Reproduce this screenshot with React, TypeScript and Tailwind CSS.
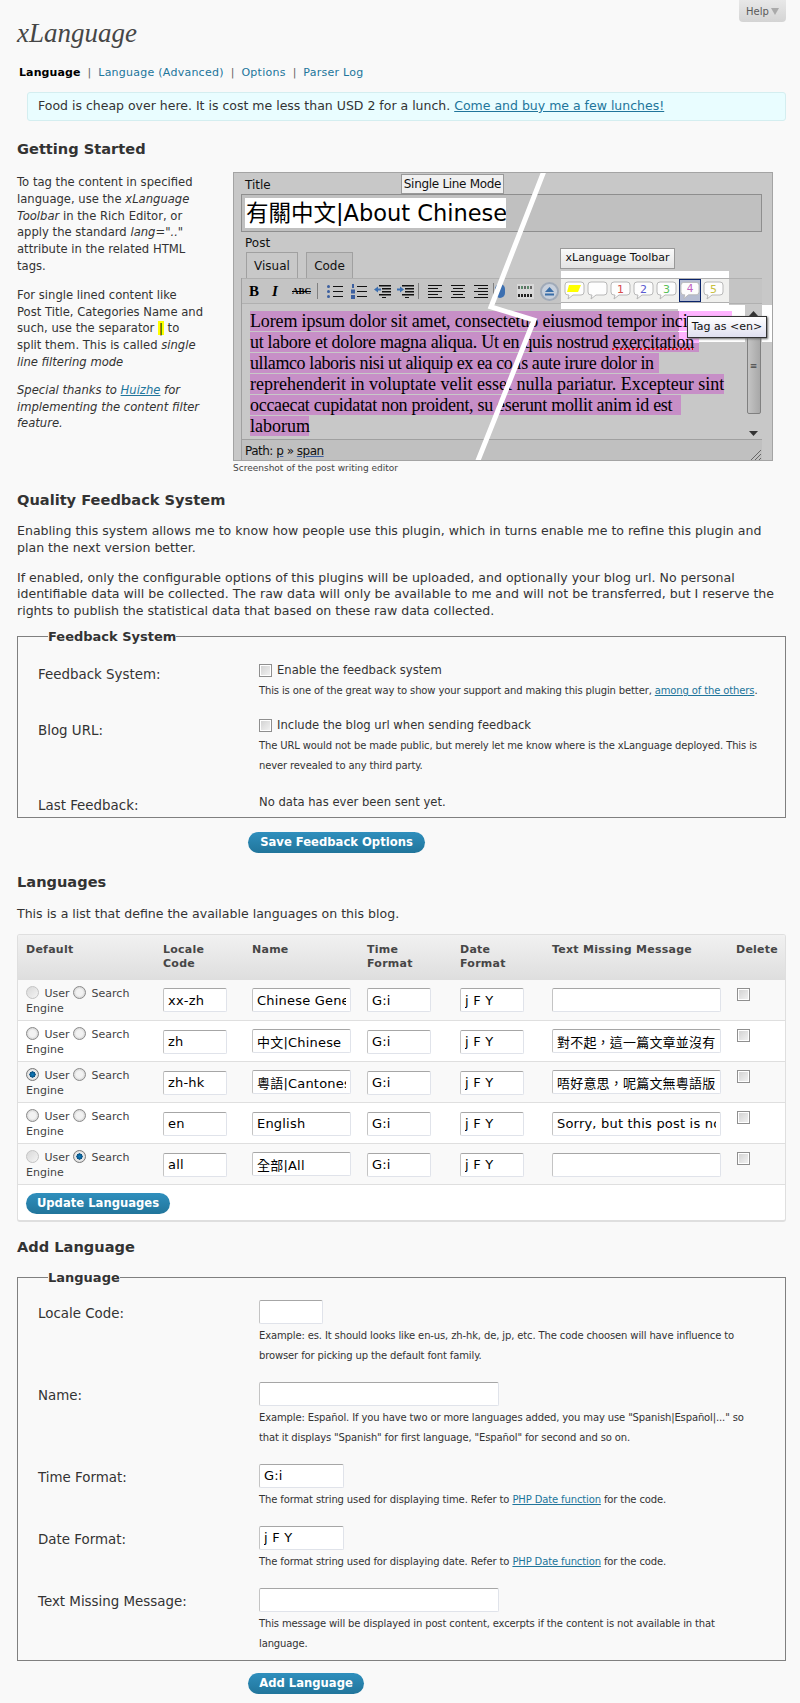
import React from "react";

const sans = "font-['DejaVu_Sans','Noto_Sans_CJK_TC',sans-serif]";

function BlueButton({ children, className = "" }: { children: React.ReactNode; className?: string }) {
  return (
    <button
      className={`flex h-[21px] items-center justify-center rounded-full bg-[linear-gradient(#2f8fbd,#21759b)] text-[11.6px] font-bold text-white ${className}`}
    >
      {children}
    </button>
  );
}

function Check({ className = "" }: { className?: string }) {
  return (
    <input
      type="checkbox"
      className={`m-0 h-[13px] w-[13px] shrink-0 appearance-none border border-[#8f8f8f] bg-[linear-gradient(135deg,#d0d0d0,#f4f4f4)] shadow-[inset_0_0_0_1px_#fff] ${className}`}
    />
  );
}

function Radio({ checked = false, faded = false }: { checked?: boolean; faded?: boolean }) {
  return (
    <input
      type="radio"
      defaultChecked={checked}
      disabled={faded}
      className={`m-0 inline-block h-[13px] w-[13px] appearance-none rounded-full border align-[-2px] ${
        checked
          ? "border-[#7a7a7a] bg-[radial-gradient(circle,#0f7fc0_0,#0a4f80_38%,#f0f0f0_42%,#c8c8c8_100%)]"
          : faded
            ? "border-[#c4c4c4] bg-[linear-gradient(135deg,#d8d8d8,#f4f4f4)]"
            : "border-[#8c8c8c] bg-[radial-gradient(circle,#f2f2f2_0,#f2f2f2_40%,#c0c0c0_100%)]"
      }`}
    />
  );
}

function Field({ value = "", className = "" }: { value?: string; className?: string }) {
  return (
    <input
      readOnly
      value={value}
      className={`h-[24px] rounded-[2px] border border-[#e0e3ea] border-t-[#a6a6a6] border-l-[#c4c4c4] bg-white px-[4px] text-[13px] tracking-[0.2px] text-black outline-none ${className}`}
    />
  );
}

function Lines({ align }: { align: "l" | "c" | "r" }) {
  const rows = [
    [14, 1],
    [10, 4],
    [14, 7],
    [10, 10],
    [14, 13],
  ];
  return (
    <svg width="16" height="15" viewBox="0 0 16 15">
      {rows.map(([w, y]) => (
        <rect key={y} x={align === "l" ? 1 : align === "r" ? 15 - w : 8 - w / 2} y={y} width={w} height="1" fill="#111" />
      ))}
    </svg>
  );
}

function ListIcon({ kind }: { kind: "bullet" | "number" | "outdent" | "indent" }) {
  return (
    <svg width="17" height="15" viewBox="0 0 17 15">
      {kind === "bullet" && (
        <>
          <circle cx="2.5" cy="2.5" r="1.5" fill="#3c5f9f" />
          <circle cx="2.5" cy="7.5" r="1.5" fill="#3c5f9f" />
          <circle cx="2.5" cy="12.5" r="1.5" fill="#3c5f9f" />
          <rect x="7" y="2" width="10" height="1" fill="#111" />
          <rect x="7" y="7" width="10" height="1" fill="#111" />
          <rect x="7" y="12" width="10" height="1" fill="#111" />
        </>
      )}
      {kind === "number" && (
        <>
          <rect x="2" y="0" width="2" height="4" fill="#3c5f9f" />
          <rect x="1" y="5.5" width="4" height="4" fill="#3c5f9f" />
          <rect x="1" y="11" width="4" height="4" fill="#3c5f9f" />
          <rect x="7" y="2" width="10" height="1" fill="#111" />
          <rect x="7" y="7" width="10" height="1" fill="#111" />
          <rect x="7" y="12" width="10" height="1" fill="#111" />
        </>
      )}
      {(kind === "outdent" || kind === "indent") && (
        <>
          <path
            d={kind === "outdent" ? "M0 5.5 L4 2.5 V4.5 H7 V6.5 H4 V8.5 Z" : "M7 5.5 L3 2.5 V4.5 H0 V6.5 H3 V8.5 Z"}
            fill="#3c6fb0"
          />
          <rect x="5" y="1" width="12" height="1.5" fill="#111" />
          <rect x="8" y="4" width="9" height="1.5" fill="#111" />
          <rect x="8" y="7" width="9" height="1.5" fill="#111" />
          <rect x="5" y="10" width="12" height="1.5" fill="#111" />
          <rect x="8" y="13" width="4" height="1" fill="#111" />
        </>
      )}
    </svg>
  );
}

function Bubble({ label, color, yellow = false }: { label?: string; color?: string; yellow?: boolean }) {
  return (
    <svg width="21" height="19" viewBox="0 0 21 19">
      <path
        d="M4 1 H17 Q20 1 20 4 V11 Q20 14 17 14 H9 L4 18 L5 14 H4 Q1 14 1 11 V4 Q1 1 4 1 Z"
        fill="#fdfdfd"
        stroke="#b8b8b8"
      />
      {yellow && <path d="M5 4 H17 L14 11 H3 Z" fill="#ffff00" />}
      {label && (
        <text x="10.5" y="11.5" textAnchor="middle" fontSize="11" fontFamily="DejaVu Sans" fill={color}>
          {label}
        </text>
      )}
    </svg>
  );
}

const editorLines = [
  {
    text: "Lorem ipsum dolor sit amet, consectetuo eiusmod tempor inci",
    width: 482,
    bg: "tracking-[-0.15px] bg-[linear-gradient(90deg,#c78fc7_429px,#ffb3ff_429px)]",
  },
  {
    text: "ut labore et dolore magna aliqua. Ut en quis nostrud ",
    tail: "exercitation",
    width: 449,
    bg: "tracking-[-0.3px] [background:linear-gradient(#ffb3ff,#ffb3ff)_429px_0/20px_11px_no-repeat,#c78fc7]",
  },
  { text: "ullamco laboris nisi ut aliquip ex ea co is aute irure dolor in", width: 409, bg: "tracking-[-0.4px] bg-[#c78fc7]" },
  { text: "reprehenderit in voluptate velit esset nulla pariatur. Excepteur sint", width: 474, bg: "bg-[#c78fc7]" },
  { text: "occaecat cupidatat non proident, su eserunt mollit anim id est", width: 431, bg: "tracking-[-0.3px] bg-[#c78fc7]" },
  { text: "laborum", width: 59, bg: "bg-[#c78fc7]" },
];

function EditorShot() {
  return (
    <div className="relative h-[289px] w-[540px] overflow-hidden border border-[#a4a4a4] bg-[#c8c8c8]">
      <div className="h-[21px] pl-[11px] pt-[4px] text-[12px] leading-[16px] text-[#111]">Title</div>
      <div className="ml-[7px] h-[38px] w-[521px] border border-[#8e8e8e] bg-[#c0c0c0] p-[3px]">
        <div className="flex h-[30px] w-[261px] items-center overflow-hidden whitespace-nowrap bg-white pl-[1px] text-[22.5px] leading-[30px] text-black">
          有關中文|About Chinese
        </div>
      </div>
      <div className="h-[20px] pl-[11px] pt-[3px] text-[12px] leading-[16px] text-[#111]">Post</div>
      <div className="flex h-[26px] gap-[8px] pl-[12px]">
        <div className="flex w-[52px] items-center justify-center border border-b-0 border-[#a0a0a0] bg-[#c8c8c8] text-[12px] text-[#111]">
          Visual
        </div>
        <div className="flex w-[47px] items-center justify-center border border-b-0 border-[#a0a0a0] bg-[#c0c0c0] text-[12px] text-[#111]">
          Code
        </div>
      </div>
      <div className="relative ml-[7px] w-[521px] border-l border-[#a0a0a0]">
        <div className="flex h-[26px] items-center border-y border-[#b0b0b0] bg-[#c4c4c4] text-black">
          <span className="ml-[7px] w-[16px] font-['Liberation_Serif',serif] text-[15px] font-bold leading-none">B</span>
          <span className="ml-[7px] w-[16px] font-['Liberation_Serif',serif] text-[15px] font-bold italic leading-none">I</span>
          <span className="ml-[4px] w-[20px] font-['Liberation_Serif',serif] text-[9px] font-bold leading-none line-through">ABC</span>
          <span className="mx-[5px] h-[16px] w-px bg-[#808080]" />
          <span className="ml-[3px] flex w-[24px]"><ListIcon kind="bullet" /></span>
          <span className="flex w-[24px]"><ListIcon kind="number" /></span>
          <span className="flex w-[23px]"><ListIcon kind="outdent" /></span>
          <span className="flex w-[21px]"><ListIcon kind="indent" /></span>
          <span className="mr-[8px] h-[16px] w-px bg-[#808080]" />
          <span className="flex w-[23px]"><Lines align="l" /></span>
          <span className="flex w-[23px]"><Lines align="c" /></span>
          <span className="flex w-[20px]"><Lines align="r" /></span>
          <span className="h-[16px] w-px bg-[#808080]" />
          <span className="ml-[1px] h-[14px] w-[10px] rounded-full bg-[#3c6fb0]" />
          <span className="ml-[12px] flex h-[15px] w-[17px] flex-col justify-between bg-[#d8d8d8] px-[1px] py-[2px]">
            <span className="h-[3px] bg-[repeating-linear-gradient(90deg,#666_0_2px,#d8d8d8_2px_3px,#5a8a6a_3px_5px,#d8d8d8_5px_6px)]" />
            <span className="h-[3px] bg-[repeating-linear-gradient(90deg,#222_0_2px,#d8d8d8_2px_3px)]" />
          </span>
          <span className="ml-[6px] flex h-[19px] w-[19px] items-center justify-center rounded-full border-[2px] border-[#a0aab8] bg-[#c8d0dc]">
            <svg width="11" height="9" viewBox="0 0 11 9">
              <path d="M5.5 0 L10 5 H1 Z" fill="#3a6ea8" />
              <rect x="1" y="6.5" width="9" height="2" fill="#3a6ea8" />
            </svg>
          </span>
        </div>
        <div className="relative h-[135px] bg-[#c8c8c8] pl-[8px] pt-[7px]">
          <div className="absolute left-[436px] top-[1px] h-[37px] w-[95px] bg-white" />
          <div className="relative font-['Liberation_Serif',serif] text-[18px] text-black">
            {editorLines.map((line) => (
              <div key={line.text} className="h-[21px]">
                <div
                  className={`h-[20px] whitespace-nowrap leading-[20px] ${line.bg}`}
                  style={{ width: line.width }}
                >
                  {line.text}
                  {line.tail && <span className="underline decoration-[#e00000] decoration-dotted">{line.tail}</span>}
                </div>
              </div>
            ))}
          </div>
          {/* scrollbar */}
          <div className="absolute right-0 top-0 flex h-[135px] w-[17px] flex-col items-center bg-[#c8c8c8]">
            <svg className="mt-[7px]" width="9" height="5" viewBox="0 0 9 5">
              <path d="M4.5 0 L9 5 H0 Z" fill="#333" />
            </svg>
            <div className="mt-[3px] flex h-[95px] w-[14px] items-center justify-center rounded-[2px] border border-[#808080] bg-[linear-gradient(90deg,#c4c4c4,#a8a8a8)] text-[9px] leading-none text-[#444]">
              ≡
            </div>
            <svg className="mt-[17px]" width="9" height="5" viewBox="0 0 9 5">
              <path d="M4.5 5 L9 0 H0 Z" fill="#333" />
            </svg>
          </div>
        </div>
        <div className="relative flex h-[22px] items-center border-t border-[#a0a0a0] bg-[#c0c0c0] pl-[3px] text-[12px] tracking-[-0.5px] text-[#111]">
          Path:&nbsp;<span className="underline decoration-[#3c5f9f]">p</span>&nbsp;»&nbsp;
          <span className="underline decoration-[#3c5f9f]">span</span>
          <svg className="absolute bottom-[1px] right-[1px]" width="11" height="11" viewBox="0 0 11 11">
            <path d="M1 11 L11 1 M5 11 L11 5 M9 11 L11 9" stroke="#666" />
          </svg>
        </div>
      </div>
      {/* overlays */}
      <div className="absolute left-[327px] top-[98px] h-[38px] w-[168px] bg-white">
        <div className="mt-[7px] flex h-[25px] items-center gap-[2px] border-y border-[#b0b0b0] bg-[#f0f0ee] pl-[3px]">
          <Bubble yellow />
          <Bubble />
          <Bubble label="1" color="#d84a4a" />
          <Bubble label="2" color="#5a5ad0" />
          <Bubble label="3" color="#58c058" />
          <div className="flex h-[23px] w-[22px] items-center justify-center border border-[#0a246a] bg-[#b6bdd2]">
            <Bubble label="4" color="#c060c0" />
          </div>
          <Bubble label="5" color="#c8c040" />
        </div>
      </div>
      <div className="absolute left-[167px] top-[1px] flex h-[20px] w-[103px] items-center justify-center border border-[#999] bg-[#f0f0f0] text-[12px] tracking-[-0.3px] text-[#111]">
        Single Line Mode
      </div>
      <div className="absolute left-[326px] top-[75px] flex h-[21px] w-[115px] items-center justify-center border border-[#999] bg-[linear-gradient(#fafafa,#e4e4e4)] text-[11px] text-[#111]">
        xLanguage Toolbar
      </div>
      <div className="absolute left-[453px] top-[143px] flex h-[22px] w-[80px] items-center justify-center border border-[#333] bg-[linear-gradient(#ffffff,#e0e0f0)] text-[11px] text-[#111] shadow-[1px_1px_2px_#666]">
        Tag as &lt;en&gt;
      </div>
      <svg className="absolute left-0 top-0" width="540" height="289" viewBox="0 0 540 289">
        <path d="M310 -2 L257 134 L300 147 L243 290" fill="none" stroke="#fff" strokeWidth="5" />
      </svg>
    </div>
  );
}

const languages = [
  { code: "xx-zh", name: "Chinese General", miss: "", user: false, search: false, faded: true },
  { code: "zh", name: "中文|Chinese", miss: "對不起，這一篇文章並沒有中文版本", user: false, search: false, faded: false },
  { code: "zh-hk", name: "粵語|Cantonese", miss: "唔好意思，呢篇文無粵語版", user: true, search: false, faded: false },
  { code: "en", name: "English", miss: "Sorry, but this post is not available in English", user: false, search: false, faded: false },
  { code: "all", name: "全部|All", miss: "", user: false, search: true, faded: true },
];

function Hint({ children }: { children: React.ReactNode }) {
  return <div className="text-[10px] leading-[20px] tracking-[-0.13px] text-[#333]">{children}</div>;
}

const link = "text-[#21759b] underline";

function FormRow({
  label,
  children,
  className = "",
  labelClass = "pt-[4px]",
}: {
  label: string;
  children: React.ReactNode;
  className?: string;
  labelClass?: string;
}) {
  return (
    <div className={`flex ${className}`}>
      <div className={`w-[241px] pl-[20px] text-[13.4px] leading-[20px] text-[#333] ${labelClass}`}>{label}</div>
      <div className="w-[510px]">{children}</div>
    </div>
  );
}

export default function App() {
  const headCols = ["Default", "Locale Code", "Name", "Time Format", "Date Format", "Text Missing Message", "Delete"];
  return (
    <div className={`relative h-[1703px] w-[800px] overflow-hidden bg-[#f9f9f9] pl-[17px] pr-[14px] pt-[18px] ${sans} text-[#333]`}>
      <div className="absolute right-[14px] top-0 flex h-[22px] w-[47px] items-center justify-center gap-[2px] rounded-b-[4px] bg-[linear-gradient(#e8e8e8,#d4d4d4)] text-[10px] text-[#5a5a5a]">
        Help
        <span className="h-0 w-0 border-x-[4px] border-t-[7px] border-x-transparent border-t-[#aaa]" />
      </div>

      <h1 className="h-[30px] font-['Liberation_Serif',serif] text-[27px] italic leading-[30px] text-[#464646]">xLanguage</h1>

      <nav className="ml-[2px] mt-[17px] flex h-[16px] items-center text-[11px] text-[#21759b]">
        <span className="font-bold tracking-[0.1px] text-black">Language</span>
        <span className="mx-[7px] text-[#666]">|</span>
        <span className="tracking-[0.25px]">Language (Advanced)</span>
        <span className="mx-[7px] text-[#666]">|</span>
        <span className="tracking-[0.25px]">Options</span>
        <span className="mx-[7px] text-[#666]">|</span>
        <span className="tracking-[0.25px]">Parser Log</span>
      </nav>

      <div className="ml-[10px] mt-[11px] flex h-[29px] items-center rounded-[3px] border border-[#d4eef0] bg-[#e9fdff] pl-[10px] text-[12.5px] text-[#333]">
        Food is cheap over here. It is cost me less than USD 2 for a lunch.&nbsp;
        <span className={link}>Come and buy me a few lunches!</span>
      </div>

      <h2 className="mt-[18px] h-[20px] text-[14.6px] font-bold leading-[20px] text-[#333]">Getting Started</h2>

      <div className="mt-[13px] flex">
        <div className="w-[216px] pt-[2px] text-[11.6px] leading-[16.8px]">
          <p>
            To tag the content in specified
            <br />
            language, use the <em>xLanguage</em>
            <br />
            <em>Toolbar</em> in the Rich Editor, or
            <br />
            apply the standard <em>lang=".."</em>
            <br />
            attribute in the related HTML
            <br />
            tags.
          </p>
          <p className="mt-[12px]">
            For single lined content like
            <br />
            Post Title, Categories Name and
            <br />
            such, use the separator <span className="bg-[#ffff00] px-[1px] text-black">|</span> to
            <br />
            split them. This is called <em>single</em>
            <br />
            <em>line filtering mode</em>
          </p>
          <p className="mt-[11px] italic">
            Special thanks to <span className={link}>Huizhe</span> for
            <br />
            implementing the content filter
            <br />
            feature.
          </p>
        </div>
        <div>
          <EditorShot />
          <div className="h-[14px] text-[9px] leading-[14px] text-[#444]">Screenshot of the post writing editor</div>
        </div>
      </div>

      <h2 className="mt-[15px] h-[20px] text-[14.6px] font-bold leading-[20px]">Quality Feedback System</h2>
      <div className="mt-[13px] text-[12.55px] leading-[16.8px]">
        <p>
          Enabling this system allows me to know how people use this plugin, which in turns enable me to refine this plugin and
          <br />
          plan the next version better.
        </p>
        <p className="mt-[13px]">
          If enabled, only the configurable options of this plugins will be uploaded, and optionally your blog url. No personal
          <br />
          identifiable data will be collected. The raw data will only be available to me and will not be transferred, but I reserve the
          <br />
          rights to publish the statistical data that based on these raw data collected.
        </p>
      </div>

      <fieldset className="mt-[9px] h-[189px] w-[769px] border border-[#808080] pt-[16px]">
        <legend className="ml-[30px] h-[16px] text-[13px] font-bold leading-[16px]">Feedback System</legend>
        <FormRow label="Feedback System:">
          <label className="flex h-[20px] items-center gap-[5px] text-[11.6px]">
            <Check /> Enable the feedback system
          </label>
          <Hint>
            This is one of the great way to show your support and making this plugin better,{" "}
            <span className={link}>among of the others</span>.
          </Hint>
        </FormRow>
        <FormRow label="Blog URL:" className="mt-[15px]" labelClass="pt-[5px]">
          <label className="flex h-[20px] items-center gap-[5px] text-[11.6px]">
            <Check /> Include the blog url when sending feedback
          </label>
          <Hint>
            The URL would not be made public, but merely let me know where is the xLanguage deployed. This is
            <br />
            never revealed to any third party.
          </Hint>
        </FormRow>
        <FormRow label="Last Feedback:" className="mt-[16px]">
          <div className="h-[20px] text-[11.6px] leading-[20px]">No data has ever been sent yet.</div>
        </FormRow>
      </fieldset>

      <BlueButton className="ml-[231px] mt-[14px] w-[177px]">Save Feedback Options</BlueButton>

      <h2 className="mt-[19px] h-[20px] text-[14.6px] font-bold leading-[20px]">Languages</h2>
      <p className="mt-[12px] h-[20px] text-[12.55px] leading-[20px]">This is a list that define the available languages on this blog.</p>

      <div className="mt-[10px] h-[288px] w-[769px] overflow-hidden rounded-[3px] border border-[#dfdfdf] border-b-[2px] bg-white">
        <table className="w-[767px] table-fixed border-collapse">
          <colgroup>
            <col className="w-[137px]" />
            <col className="w-[89px]" />
            <col className="w-[115px]" />
            <col className="w-[93px]" />
            <col className="w-[92px]" />
            <col className="w-[185px]" />
            <col className="w-[56px]" />
          </colgroup>
          <thead>
            <tr className="h-[45px] bg-[linear-gradient(#f1f1f1,#dedede)]">
              {headCols.map((col) => (
                <th key={col} className="px-[8px] pt-[8px] text-left align-top text-[11px] font-bold leading-[14px] tracking-[0.25px] text-[#464646]">
                  {col === "Delete" ? <span className="-ml-[1px] block whitespace-nowrap">{col}</span> : col}
                </th>
              ))}
            </tr>
          </thead>
          <tbody>
            {languages.map((lang, i) => (
              <tr key={lang.code} className={`h-[41px] border-b border-[#dfdfdf] ${i % 2 === 0 ? "bg-[#f9f9f9]" : "bg-white"}`}>
                <td className="pl-[8px] pr-[2px] align-top text-[11px] leading-[15px] text-[#444]">
                  <div className="pt-[6px]">
                    <Radio checked={lang.user} faded={lang.faded} /> <span className="ml-[2px]">User</span>{" "}
                    <Radio checked={lang.search} /> <span className="ml-[2px]">Search</span> Engine
                  </div>
                </td>
                <td className="px-[8px] pt-[8px] align-top">
                  <Field value={lang.code} className="w-[64px]" />
                </td>
                <td className="px-[8px] pt-[8px] align-top">
                  <Field value={lang.name} className="w-[99px]" />
                </td>
                <td className="px-[8px] pt-[8px] align-top">
                  <Field value="G:i" className="w-[64px]" />
                </td>
                <td className="px-[8px] pt-[8px] align-top">
                  <Field value="j F Y" className="w-[64px]" />
                </td>
                <td className="px-[8px] pt-[8px] align-top">
                  <Field value={lang.miss} className="w-[169px]" />
                </td>
                <td className="pl-[8px] pt-[8px] align-top">
                  <Check className="block" />
                </td>
              </tr>
            ))}
          </tbody>
        </table>
        <div className="pl-[8px] pt-[8px]">
          <BlueButton className="w-[144px]">Update Languages</BlueButton>
        </div>
      </div>

      <h2 className="mt-[15px] h-[20px] text-[14.6px] font-bold leading-[20px]">Add Language</h2>

      <fieldset className="mt-[13px] h-[391px] w-[769px] border border-[#808080] pt-[14px]">
        <legend className="ml-[30px] h-[16px] text-[13px] font-bold leading-[16px]">Language</legend>
        <FormRow label="Locale Code:">
          <Field className="block w-[64px]" />
          <div className="mt-[2px]">
            <Hint>
              Example: es. It should looks like en-us, zh-hk, de, jp, etc. The code choosen will have influence to
              <br />
              browser for picking up the default font family.
            </Hint>
          </div>
        </FormRow>
        <FormRow label="Name:" className="mt-[16px]">
          <Field className="block w-[240px]" />
          <div className="mt-[2px]">
            <Hint>
              Example: Español. If you have two or more languages added, you may use "Spanish|Español|..." so
              <br />
              that it displays "Spanish" for first language, "Español" for second and so on.
            </Hint>
          </div>
        </FormRow>
        <FormRow label="Time Format:" className="mt-[16px]">
          <Field value="G:i" className="block w-[85px]" />
          <div className="mt-[2px]">
            <Hint>
              The format string used for displaying time. Refer to <span className={link}>PHP Date function</span> for the code.
            </Hint>
          </div>
        </FormRow>
        <FormRow label="Date Format:" className="mt-[16px]">
          <Field value="j F Y" className="block w-[85px]" />
          <div className="mt-[2px]">
            <Hint>
              The format string used for displaying date. Refer to <span className={link}>PHP Date function</span> for the code.
            </Hint>
          </div>
        </FormRow>
        <FormRow label="Text Missing Message:" className="mt-[16px]">
          <Field className="block w-[240px]" />
          <div className="mt-[2px]">
            <Hint>
              This message will be displayed in post content, excerpts if the content is not available in that
              <br />
              language.
            </Hint>
          </div>
        </FormRow>
      </fieldset>

      <BlueButton className="ml-[231px] mt-[12px] w-[116px]">Add Language</BlueButton>
    </div>
  );
}
